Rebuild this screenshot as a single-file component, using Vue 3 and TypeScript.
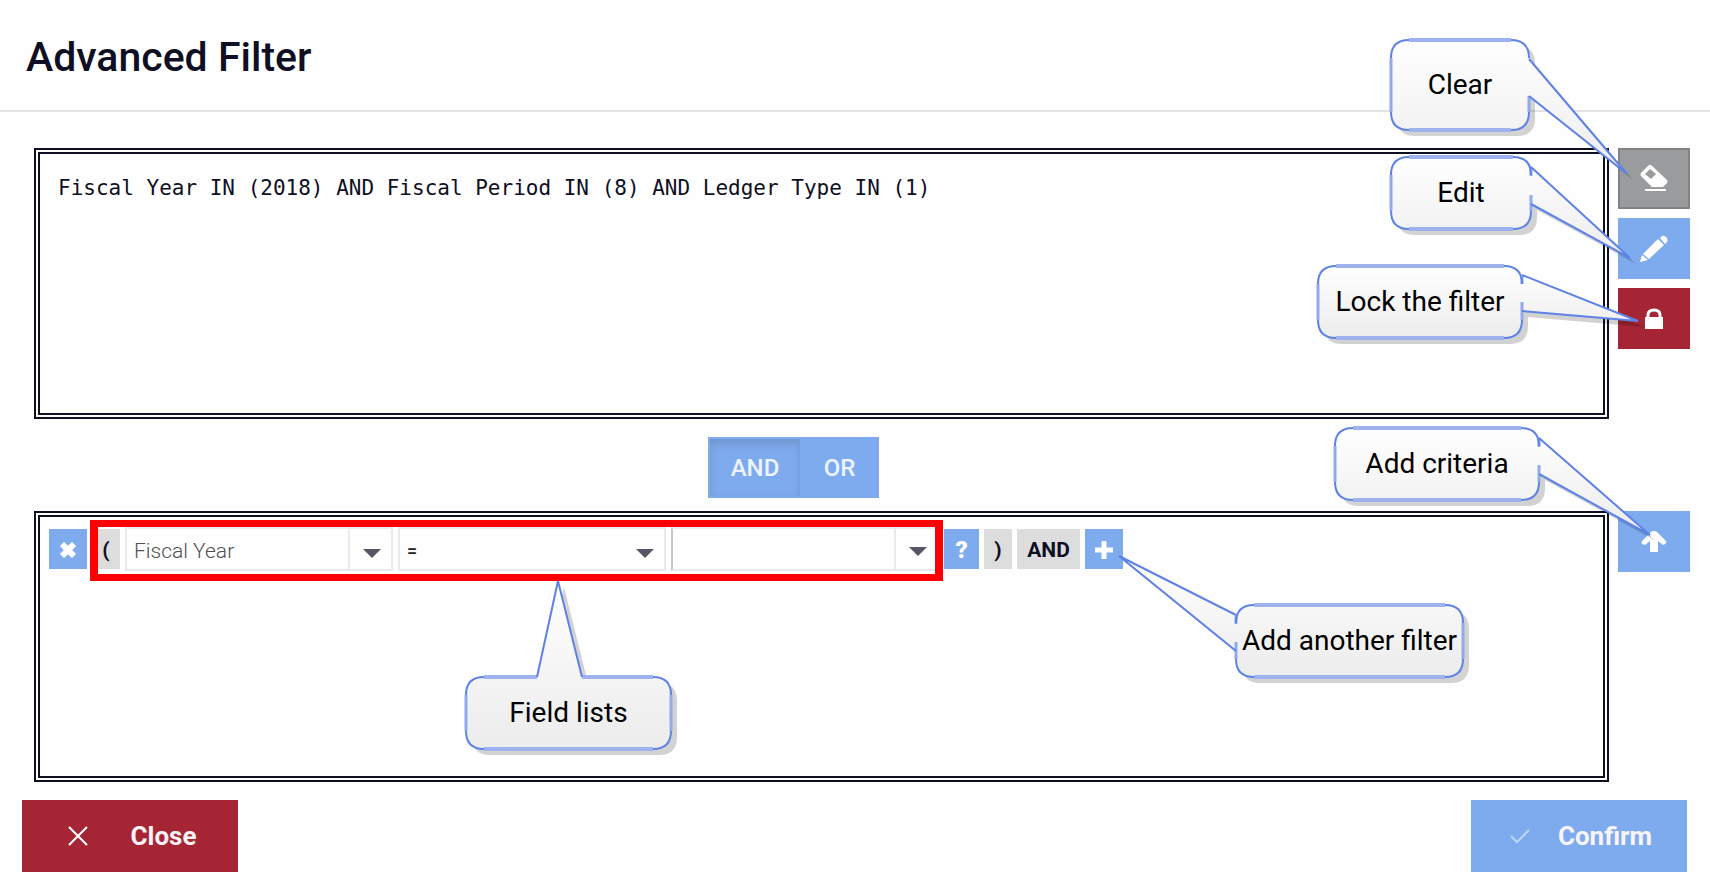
<script setup lang="ts">
import { ref } from 'vue'

type Side = 'right' | 'left' | 'top'

interface Callout {
  id: string
  label: string
  side: Side
  w: number
  h: number
  /** where the tail leaves the box, along its side */
  from: number
  to: number
  tip: [number, number]
  /** the tail meets the box without short side strokes */
  open?: boolean
}

const expression = ref('Fiscal Year IN (2018) AND Fiscal Period IN (8) AND Ledger Type IN (1)')
const joiner = ref<'AND' | 'OR'>('AND')
const field = ref('Fiscal Year')
const operator = ref('=')
const value = ref('')

const R = 18

const callouts: Callout[] = [
  { id: 'clear', label: 'Clear', side: 'right', w: 138, h: 90, from: 19, to: 56, tip: [236, 134], open: true },
  { id: 'edit', label: 'Edit', side: 'right', w: 140, h: 72, from: 10, to: 47, tip: [239, 101] },
  { id: 'lock', label: 'Lock the filter', side: 'right', w: 204, h: 72, from: 9, to: 45, tip: [320, 55] },
  { id: 'criteria', label: 'Add criteria', side: 'right', w: 204, h: 72, from: 10, to: 46, tip: [315, 107] },
  { id: 'fields', label: 'Field lists', side: 'top', w: 205, h: 72, from: 71, to: 116, tip: [92, -96] },
  { id: 'another', label: 'Add another filter', side: 'left', w: 227, h: 72, from: 10, to: 46, tip: [-117, -49] },
]

function box(c: Callout): string {
  const { w, h } = c
  return `M${R} 0H${w - R}Q${w} 0 ${w} ${R}V${h - R}Q${w} ${h} ${w - R} ${h}H${R}Q0 ${h} 0 ${h - R}V${R}Q0 0 ${R} 0Z`
}

function anchors(c: Callout): [number, number][] {
  if (c.side === 'top') return [[c.from, 0], [c.to, 0]]
  const x = c.side === 'right' ? c.w : 0
  return [[x, c.from], [x, c.to]]
}

function tail(c: Callout): string {
  const [a, b] = anchors(c)
  return `M${a}L${c.tip}L${b}`
}

function tailBody(c: Callout): string {
  const [a, b] = anchors(c)
  if (c.side === 'top') return `M${a}L${c.tip}L${b}V4H${a[0]}Z`
  const x = c.side === 'right' ? c.w - 3 : 3
  return `M${a}L${c.tip}L${b}H${x}V${a[1]}Z`
}

function flats(c: Callout): string {
  const { w, h } = c
  const top = c.side === 'top' ? `M${R} 0H${c.from}M${c.to} 0H${w - R}` : `M${R} 0H${w - R}`
  return `${top}M${R} ${h}H${w - R}`
}

function uprights(c: Callout): string {
  const { w, h } = c
  const split = (x: number) =>
    c.open ? `M${x} ${c.to}V${h - R}` : `M${x} ${c.from + 1}V${c.from + 9}M${x} ${c.to - 9}V${h - R}`
  const full = (x: number) => `M${x} ${R}V${h - R}`
  const left = c.side === 'left' ? split(0) : full(0)
  const right = c.side === 'right' ? split(w) : full(w)
  return left + right
}

function corners(c: Callout): string {
  const { w, h } = c
  return `M0 ${R}Q0 0 ${R} 0M${w - R} 0Q${w} 0 ${w} ${R}M${w} ${h - R}Q${w} ${h} ${w - R} ${h}M${R} ${h}Q0 ${h} 0 ${h - R}`
}

function span(c: Callout): { y1: number; y2: number } {
  return { y1: Math.min(0, c.tip[1]), y2: Math.max(c.h, c.tip[1]) }
}
</script>

<template>
  <main class="page">
    <header class="header">
      <h1>Advanced Filter</h1>
    </header>

    <section class="panel">
      <textarea v-model="expression" class="frame expression" aria-label="Filter expression" spellcheck="false"></textarea>
      <div class="side">
        <button class="tool grey" type="button" aria-label="Clear">
          <svg width="28" height="28" viewBox="0 0 28 28">
            <path fill="#fff" fill-rule="evenodd" d="M9 0Q10-1 11 0L27 15Q28 16 27 18L23 22H12L1 11Q0 10 1 8ZM10 4 5 9 11 14 16 9Z" />
            <path fill="#fff" d="M5 24H26V26H5Z" />
          </svg>
        </button>
        <button class="tool blue" type="button" aria-label="Edit">
          <svg width="28" height="28" viewBox="0 0 28 28">
            <path fill="#fff" d="M20 3 22 1Q24 0 26 2L27 3Q28 5 27 7L25 9Z" />
            <path fill="#fff" d="M18 4 24 10 9 24 3 19Z" />
            <path fill="#fff" d="M2 20 8 25 0 27Z" />
          </svg>
        </button>
        <button class="tool red" type="button" aria-label="Lock the filter">
          <svg width="20" height="22" viewBox="0 0 20 22">
            <path fill="#fff" d="M1 9H19V21H1Z" />
            <path fill="none" stroke="#fff" stroke-width="3" d="M4 10V7Q4 2 10 2T16 7V10" />
          </svg>
        </button>
      </div>
    </section>

    <div class="joiner" role="group" aria-label="Combine criteria">
      <button type="button" :class="{ pressed: joiner === 'AND' }" :aria-pressed="joiner === 'AND'" @click="joiner = 'AND'">AND</button>
      <button type="button" :class="{ pressed: joiner === 'OR' }" :aria-pressed="joiner === 'OR'" @click="joiner = 'OR'">OR</button>
    </div>

    <section class="panel">
      <div class="frame builder">
        <div class="row">
          <button class="chip blue wide" type="button" aria-label="Remove criterion">
            <svg width="16" height="16" viewBox="0 0 16 16">
              <path stroke="#fff" stroke-width="6" d="M2 2 14 14M14 2 2 14" />
            </svg>
          </button>
          <div class="criterion">
            <button class="chip paren" type="button">(</button>
            <label class="picker divided">
              <select v-model="field" aria-label="Field">
                <option>Fiscal Year</option>
                <option>Fiscal Period</option>
                <option>Ledger Type</option>
              </select>
              <svg class="caret" width="18" height="9" viewBox="0 0 18 9"><path fill="#555566" d="M0 0H18L9 9Z" /></svg>
            </label>
            <label class="picker operator">
              <select v-model="operator" aria-label="Operator">
                <option>=</option>
                <option>IN</option>
              </select>
              <svg class="caret" width="18" height="9" viewBox="0 0 18 9"><path fill="#555566" d="M0 0H18L9 9Z" /></svg>
            </label>
            <label class="picker divided value">
              <select v-model="value" aria-label="Value">
                <option value=""></option>
                <option>2018</option>
              </select>
              <svg class="caret" width="18" height="9" viewBox="0 0 18 9"><path fill="#555566" d="M0 0H18L9 9Z" /></svg>
            </label>
          </div>
          <button class="chip blue help" type="button">?</button>
          <button class="chip paren" type="button">)</button>
          <button class="chip logic" type="button">AND</button>
          <button class="chip blue wide" type="button" aria-label="Add another filter">
            <svg width="18" height="18" viewBox="0 0 18 18">
              <path stroke="#fff" stroke-width="5" d="M9 0V18M0 9H18" />
            </svg>
          </button>
        </div>
      </div>
      <div class="side">
        <button class="tool blue" type="button" aria-label="Add criteria">
          <svg width="26" height="22" viewBox="0 0 26 22">
            <path fill="#fff" d="M13 0Q15 0 16 1L25 10Q26 12 24 13L22 14 17 10V21H9V10L4 14 1 13Q0 11 1 10L10 1Q11 0 13 0Z" />
          </svg>
        </button>
      </div>
    </section>

    <footer class="footer">
      <button class="action red close" type="button">
        <svg width="20" height="20" viewBox="0 0 20 20">
          <path stroke="#fff" stroke-width="2" d="M1 1 19 19M19 1 1 19" />
        </svg>
        Close
      </button>
      <button class="action blue confirm" type="button">
        <svg width="20" height="16" viewBox="0 0 20 16">
          <path fill="none" stroke="#fff" stroke-opacity=".5" stroke-width="2" d="M1 8 7 14 19 2" />
        </svg>
        Confirm
      </button>
    </footer>

    <div v-for="c in callouts" :key="c.id" class="callout" :class="c.id">
      <svg :width="c.w" :height="c.h" aria-hidden="true">
        <defs>
          <linearGradient :id="`fill-${c.id}`" gradientUnits="userSpaceOnUse" x1="0" x2="0" :y1="span(c).y1" :y2="span(c).y2">
            <stop offset="0" stop-color="#ffffff" />
            <stop offset="1" stop-color="#ececec" />
          </linearGradient>
        </defs>
        <g class="shade" transform="translate(6 6)">
          <path :d="box(c)" />
          <path :d="tailBody(c)" />
        </g>
        <path :d="box(c)" :fill="`url(#fill-${c.id})`" />
        <path :d="flats(c)" class="flat" />
        <path :d="tailBody(c)" :fill="`url(#fill-${c.id})`" />
        <path :d="uprights(c)" class="upright" />
        <path :d="corners(c)" class="thin" />
        <path :d="tail(c)" class="thin" />
      </svg>
      <span>{{ c.label }}</span>
    </div>
  </main>
</template>

<style>
body {
  margin: 0;
  background: #fefefe;
}
</style>

<style scoped>
.page {
  position: relative;
  min-height: 100vh;
  box-sizing: border-box;
  overflow: hidden;
  color: #0f0f23;
  font-family: Roboto, "Liberation Sans", sans-serif;
}

.header {
  padding: 33px 26px 29px;
  border-bottom: 2px solid #e3e3e3;
  margin-bottom: 36px;
}

h1 {
  margin: 0;
  font-size: 41px;
  line-height: 48px;
  font-weight: 500;
}

button {
  border: 0;
  padding: 0;
  font-family: inherit;
  cursor: pointer;
}

.panel {
  display: flex;
  gap: 9px;
  padding: 0 20px 0 34px;
}

.frame {
  flex: 1;
  min-width: 0;
  height: 271px;
  box-sizing: border-box;
  border: 6px double #0f0f23;
  background: #fefefe;
}

.expression {
  display: block;
  margin: 0;
  padding: 20px 18px;
  resize: none;
  outline: 0;
  color: #0f0f23;
  font: 21px/28px "DejaVu Sans Mono", "Liberation Mono", monospace;
}

.side {
  width: 72px;
  display: flex;
  flex-direction: column;
  gap: 9px;
}

.tool {
  height: 61px;
  display: flex;
  align-items: center;
  justify-content: center;
}

.blue {
  background: #7eabee;
}

.red {
  background: #a52535;
}

.grey {
  background: #999b9d;
  border: 2px solid #808284;
}

.joiner {
  display: flex;
  justify-content: center;
  padding: 18px 157px 13px 34px;
}

.joiner button {
  height: 61px;
  width: 79px;
  border: 2px solid #7eabee;
  background: #7eabee;
  color: #eef4fd;
  font-size: 24px;
  font-weight: 500;
}

.joiner button:first-child {
  width: 92px;
  border-right-width: 0;
}

.joiner .pressed {
  box-shadow: inset 0 5px 9px rgba(0, 0, 0, 0.13);
}

.builder {
  padding: 10px 9px;
}

.row,
.criterion {
  display: flex;
  align-items: center;
  gap: 5px;
}

.criterion {
  position: relative;
}

.criterion::after {
  content: "";
  position: absolute;
  inset: -7px -4px -10px -2px;
  border: solid #ff0000;
  border-width: 7px 8px;
  pointer-events: none;
}

.chip {
  height: 40px;
  padding-top: 2px;
  display: flex;
  align-items: center;
  justify-content: center;
  background: #dddddd;
  color: #0f0f23;
  font-size: 21px;
  line-height: 28px;
  font-weight: 700;
}

.chip.blue {
  background: #7eabee;
  color: #ffffff;
}

.wide {
  width: 38px;
}

.help {
  width: 35px;
  font-size: 24px;
  font-weight: 900;
}

.paren {
  width: 28px;
}

.logic {
  width: 63px;
}

.picker {
  position: relative;
  width: 268px;
  height: 44px;
  display: flex;
}

.picker select {
  flex: 1;
  appearance: none;
  border: 2px solid #e9e9ee;
  border-radius: 0;
  padding: 3px 7px 0;
  background: #fefefe;
  color: #505050;
  font: 300 21px/28px Roboto, "Liberation Sans", sans-serif;
}

.picker.operator select {
  color: #222222;
  font-weight: 500;
  font-size: 18px;
}

.picker.value select {
  border-left-color: #c8c8cc;
}

.caret {
  position: absolute;
  right: 12px;
  top: 22px;
  pointer-events: none;
}

.value .caret {
  top: 20px;
}

.divided::after {
  content: "";
  position: absolute;
  top: 0;
  bottom: 0;
  right: 43px;
  width: 2px;
  background: #e9e9ee;
}

.footer {
  display: flex;
  justify-content: space-between;
  padding: 18px 23px 16px 22px;
}

.action {
  width: 216px;
  height: 72px;
  padding-left: 4px;
  display: flex;
  align-items: center;
  justify-content: center;
  color: #f8f4f8;
  font-size: 26px;
  font-weight: 700;
}

.close {
  gap: 43px;
}

.confirm {
  gap: 28px;
}

.callout {
  position: absolute;
  display: flex;
  align-items: center;
  justify-content: center;
  color: #000000;
  font-size: 28px;
  line-height: 32px;
  white-space: nowrap;
  pointer-events: none;
}

.callout svg {
  overflow: visible;
  display: block;
}

.callout span {
  position: absolute;
}

.clear {
  top: 40px;
  right: 181px;
}

.edit {
  top: 157px;
  right: 179px;
}

.lock {
  top: 266px;
  right: 188px;
}

.criteria {
  top: 428px;
  right: 171px;
}

.fields {
  top: 677px;
  left: 466px;
}

.another {
  top: 605px;
  left: 1236px;
}

.shade {
  fill: #000000;
  opacity: 0.17;
}

.flat,
.upright,
.thin {
  fill: none;
}

.flat {
  stroke: #9db2ee;
  stroke-width: 4px;
}

.upright {
  stroke: #92aaec;
  stroke-width: 3px;
}

.thin {
  stroke: #5e82e6;
  stroke-width: 2px;
  stroke-linejoin: bevel;
}
</style>
